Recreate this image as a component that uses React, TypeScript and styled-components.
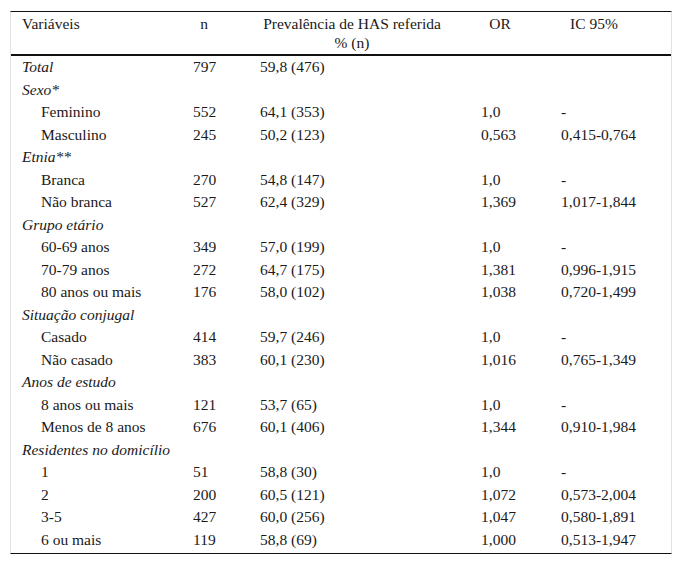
import React from 'react'
import styled, { createGlobalStyle } from 'styled-components'

const GlobalStyle = createGlobalStyle`
    body {
        margin: 0;
        background: #ffffff;
        color: #1a1a1a;
    }
`

const COLUMNS = '171px 67px 221px 80px 1fr'

const Wrapper = styled.div`
    margin: 11px 11px 0 10px;
    border-left: 1px solid #e2e2e2;
    border-right: 1px solid #e2e2e2;
    border-top: 1px solid #111111;
    border-bottom: 1px solid #111111;
    font-family: "Liberation Serif", "DejaVu Serif", "Times New Roman", serif;
    font-size: 15.5px;
`

const HeadRow = styled.div`
    display: grid;
    grid-template-columns: ${ COLUMNS };
    padding: 2px 0;
    border-bottom: 2px solid #111111;
    line-height: 19px;
`

const HeadCell = styled.div<{ $padRight?: number, $left?: boolean }>`
    text-align: ${ p => p.$left ? 'left' : 'center' };
    padding-left: ${ p => p.$left ? '11px' : '0' };
    padding-right: ${ p => p.$padRight || 0 }px;
`

const Body = styled.div`
    padding-bottom: 2px;
`

const Row = styled.div`
    display: grid;
    grid-template-columns: ${ COLUMNS };
    height: 22.5px;
    line-height: 22.5px;
`

const Cell = styled.div`
    padding-left: 11px;
    white-space: nowrap;
`

const Label = styled(Cell)<{ $group?: boolean }>`
    padding-left: ${ p => p.$group ? '11px' : '30px' };
    font-style: ${ p => p.$group ? 'italic' : 'normal' };
`

type Line = [string, string?, string?, string?, string?]

interface IGroup {
    title: string
    rows: Line[]
}

const total: Line = ['Total', '797', '59,8 (476)']

const groups: IGroup[] = [
    {
        title: 'Sexo*',
        rows: [
            ['Feminino', '552', '64,1 (353)', '1,0', '-'],
            ['Masculino', '245', '50,2 (123)', '0,563', '0,415-0,764']
        ]
    },
    {
        title: 'Etnia**',
        rows: [
            ['Branca', '270', '54,8 (147)', '1,0', '-'],
            ['Não branca', '527', '62,4 (329)', '1,369', '1,017-1,844']
        ]
    },
    {
        title: 'Grupo etário',
        rows: [
            ['60-69 anos', '349', '57,0 (199)', '1,0', '-'],
            ['70-79 anos', '272', '64,7 (175)', '1,381', '0,996-1,915'],
            ['80 anos ou mais', '176', '58,0 (102)', '1,038', '0,720-1,499']
        ]
    },
    {
        title: 'Situação conjugal',
        rows: [
            ['Casado', '414', '59,7 (246)', '1,0', '-'],
            ['Não casado', '383', '60,1 (230)', '1,016', '0,765-1,349']
        ]
    },
    {
        title: 'Anos de estudo',
        rows: [
            ['8 anos ou mais', '121', '53,7 (65)', '1,0', '-'],
            ['Menos de 8 anos', '676', '60,1 (406)', '1,344', '0,910-1,984']
        ]
    },
    {
        title: 'Residentes no domicílio',
        rows: [
            ['1', '51', '58,8 (30)', '1,0', '-'],
            ['2', '200', '60,5 (121)', '1,072', '0,573-2,004'],
            ['3-5', '427', '60,0 (256)', '1,047', '0,580-1,891'],
            ['6 ou mais', '119', '58,8 (69)', '1,000', '0,513-1,947']
        ]
    }
]

const DataRow = ({ line, group }: { line: Line, group?: boolean }) => (
    <Row>
        <Label $group={ group }>{ line[0] }</Label>
        <Cell>{ line[1] }</Cell>
        <Cell>{ line[2] }</Cell>
        <Cell>{ line[3] }</Cell>
        <Cell>{ line[4] }</Cell>
    </Row>
)

export default function App() {
    return (
        <>
            <GlobalStyle />
            <Wrapper>
                <HeadRow>
                    <HeadCell $left>Variáveis</HeadCell>
                    <HeadCell $padRight={ 23 }>n</HeadCell>
                    <HeadCell $padRight={ 15 }>Prevalência de HAS referida<br />% (n)</HeadCell>
                    <HeadCell $padRight={ 20 }>OR</HeadCell>
                    <HeadCell $padRight={ 33 }>IC 95%</HeadCell>
                </HeadRow>
                <Body>
                    <DataRow line={ total } group />
                    { groups.map(g => (
                        <React.Fragment key={ g.title }>
                            <DataRow line={ [g.title] } group />
                            { g.rows.map(r => <DataRow key={ r[0] } line={ r } />) }
                        </React.Fragment>
                    )) }
                </Body>
            </Wrapper>
        </>
    )
}
